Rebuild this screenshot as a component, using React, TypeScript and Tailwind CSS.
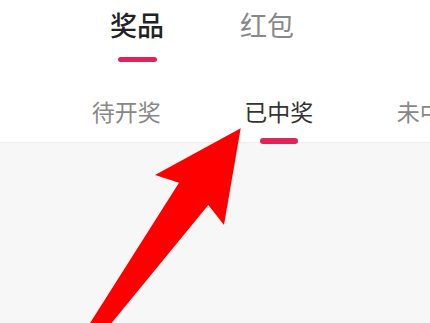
const mainTabs = ["奖品", "红包"];
const subTabs = ["待开奖", "已中奖", "未中奖"];

const App = () => {
  return (
    <div
      className="relative w-[430px] h-[323px] overflow-hidden bg-white"
      style={{ fontFamily: '"Noto Sans CJK SC", "Noto Sans", sans-serif' }}
    >
      {/* top tabs */}
      <div className="flex pl-[72px] pt-[10px]">
        {mainTabs.map((t, i) => (
          <div key={t} className="w-[130px] flex flex-col items-center">
            <span
              className={
                i === 0
                  ? "text-[27px] leading-[30px] font-medium text-[#222222]"
                  : "text-[27px] leading-[30px] text-[#888888]"
              }
            >
              {t}
            </span>
            <div
              className={
                i === 0
                  ? "mt-[17px] w-[39px] h-[5px] rounded-full bg-[#e0245a]"
                  : "mt-[17px] w-[39px] h-[5px]"
              }
            />
          </div>
        ))}
      </div>

      {/* sub tabs */}
      <div className="flex pl-[50px] pt-[38px] whitespace-nowrap">
        {subTabs.map((t, i) => (
          <div key={t} className="w-[152.5px] shrink-0 flex flex-col items-center">
            <span
              className={
                i === 1
                  ? "text-[23px] leading-[23px] text-[#333333]"
                  : "text-[23px] leading-[23px] text-[#888888]"
              }
            >
              {t}
            </span>
            <div
              className={
                i === 1
                  ? "relative z-10 mt-[15px] w-[38px] h-[6px] rounded-full bg-[#e0245a]"
                  : "mt-[15px] w-[38px] h-[6px]"
              }
            />
          </div>
        ))}
      </div>

      {/* content area */}
      <div className="-mt-[2px] h-[200px] bg-[#f7f7f7] border-t border-[#ededed]" />

      {/* annotation arrow */}
      <svg
        className="absolute left-0 top-0 pointer-events-none"
        width="430"
        height="323"
        viewBox="0 0 430 323"
      >
        <polygon
          points="240.7,128.3 224,225 208.3,205 105,331 85,331 179,182.7 155,175"
          fill="#ff0000"
        />
      </svg>
    </div>
  );
};

export default App;
